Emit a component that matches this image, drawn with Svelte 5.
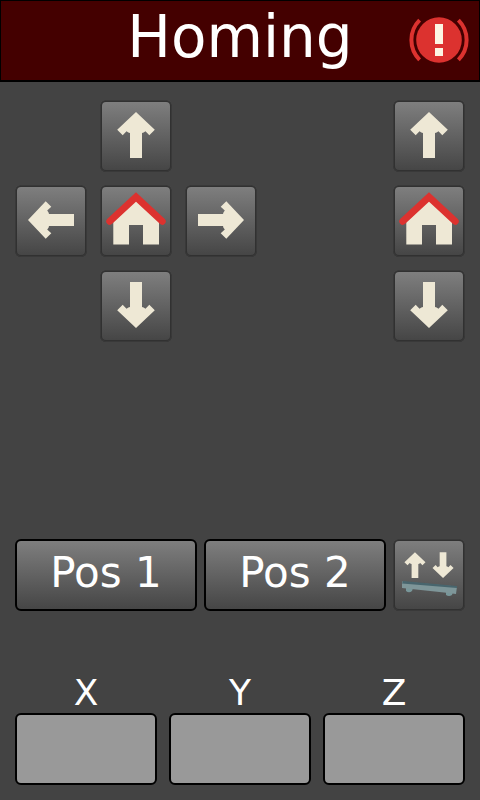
<script>
  const pad = [
    null,
    { label: 'Move Y forward', icon: 'arrow', turn: 0 },
    null,
    { label: 'Move X left', icon: 'arrow', turn: 270 },
    { label: 'Home X and Y', icon: 'home' },
    { label: 'Move X right', icon: 'arrow', turn: 90 },
    null,
    { label: 'Move Y back', icon: 'arrow', turn: 180 },
    null,
  ];
  const lift = [
    { label: 'Move Z up', icon: 'arrow', turn: 0 },
    { label: 'Home Z', icon: 'home' },
    { label: 'Move Z down', icon: 'arrow', turn: 180 },
  ];
  const axes = ['X', 'Y', 'Z'];
  const arrow =
    'M36 12 L54.8 29.7 L49.3 35.3 L45.5 31.2 Q43.5 33 42 33 V58 H30 V33 Q28.5 33 26.5 31.2 L22.7 35.3 L17.2 29.7 Z';
</script>

{#snippet iconButton(item)}
  <button class="tile" type="button" aria-label={item.label}>
    <svg viewBox="0 0 72 72" aria-hidden="true">
      {#if item.icon === 'arrow'}
        <path class="cream" d={arrow} transform="rotate({item.turn} 36 35)" />
      {:else}
        <path class="cream" d="M36 15 L59 37 V59.5 H43 V40 H29 V59.5 H13.3 V37 Z" />
        <path class="roof" d="M9.8 36.3 L36 12 L62.2 36.3" />
      {/if}
    </svg>
  </button>
{/snippet}

<main>
  <header>
    <h1>Homing</h1>
    <button class="alert" type="button" aria-label="Emergency stop">
      <svg viewBox="0 0 64 64" aria-hidden="true">
        <circle cx="32" cy="31" r="22.8" fill="#dc322f" />
        <path
          d="M12.6 11.2 A28 28 0 0 0 12.6 50.8 M51.4 11.2 A28 28 0 0 1 51.4 50.8"
          fill="none"
          stroke="#dc322f"
          stroke-width="4"
        />
        <path d="M28 15h8v20h-8z M28 39h8v8h-8z" fill="#fdf6e3" />
      </svg>
    </button>
  </header>

  <section class="jog">
    <div class="pad">
      {#each pad as item}
        {#if item}
          {@render iconButton(item)}
        {:else}
          <span></span>
        {/if}
      {/each}
    </div>
    <div class="lift">
      {#each lift as item}
        {@render iconButton(item)}
      {/each}
    </div>
  </section>

  <section class="presets">
    <button class="preset" type="button">Pos 1</button>
    <button class="preset" type="button">Pos 2</button>
    <button class="tile" type="button" aria-label="Level bed">
      <svg viewBox="0 0 72 72" aria-hidden="true">
        <path class="cream" d={arrow} transform="translate(1.8 6.5) scale(0.56)" />
        <path class="cream" d={arrow} transform="translate(70.2 45.7) rotate(180) scale(0.56)" />
        <path d="M13 48 L20 49 L19 52 Q16 54.5 13 52 Z M53 52 L60 53 L59 56 Q56 58 53 56 Z" fill="#78979a" />
        <path d="M9 42.5 L64 47.5 L63 55 L51 53.5 L9 49 Z" fill="#7e9699" />
        <path d="M10 42 L64 47 V49 L9 44.5 Z" fill="#48656d" />
      </svg>
    </button>
  </section>

  <section class="axes">
    {#each axes as axis}
      <div class="axis">
        <label for="pos-{axis}">{axis}</label>
        <input id="pos-{axis}" type="text" inputmode="decimal" />
      </div>
    {/each}
  </section>
</main>

<style>
  :global(body) {
    background: #434343;
  }

  main {
    box-sizing: border-box;
    min-height: 100vh;
    display: flex;
    flex-direction: column;
    padding-bottom: 15px;
    background: #434343;
    color: #fff;
    font-family: "DejaVu Sans", Verdana, sans-serif;
  }

  button,
  input {
    box-sizing: border-box;
    margin: 0;
    padding: 0;
    font-family: inherit;
    color: inherit;
  }

  svg {
    display: block;
    width: 100%;
    height: 100%;
  }

  header {
    display: grid;
    grid-template-columns: 64px 1fr 64px;
    align-items: center;
    padding: 0 8px;
    border: 1px solid #000;
    border-bottom-width: 2px;
    background: #440000;
  }

  h1 {
    grid-column: 2;
    margin: 0;
    padding-bottom: 7px;
    font-size: 58px;
    line-height: 72px;
    font-weight: 400;
    text-align: center;
  }

  .alert {
    width: 64px;
    height: 64px;
    border: 0;
    background: none;
  }

  .jog {
    display: flex;
    justify-content: space-between;
    padding: 18px 15px;
  }

  .pad,
  .lift {
    display: grid;
    grid-auto-rows: 72px;
    gap: 13px;
  }

  .pad {
    grid-template-columns: repeat(3, 72px);
  }

  .lift {
    grid-template-columns: 72px;
  }

  .tile,
  .preset {
    height: 72px;
    border-radius: 6px;
    background: linear-gradient(#808080, #444) border-box;
  }

  .tile {
    flex: none;
    width: 72px;
    border: 0;
    box-shadow: inset 0 0 0 1px #393939, inset 0 0 0 2px #313131;
  }

  .cream {
    fill: #eee8d5;
  }

  .roof {
    fill: none;
    stroke: #dc322f;
    stroke-width: 7;
    stroke-linecap: round;
    stroke-linejoin: miter;
  }

  .presets {
    display: flex;
    gap: 7px;
    margin-top: auto;
    padding: 0 15px;
  }

  .preset {
    flex: 1;
    border: 2px solid #000;
    font-size: 42px;
    line-height: 64px;
    padding-bottom: 4px;
  }

  .axes {
    display: flex;
    gap: 12px;
    margin-top: 62px;
    padding: 0 15px;
  }

  .axis {
    flex: 1;
    min-width: 0;
    display: flex;
    flex-direction: column;
  }

  label {
    font-size: 36px;
    line-height: 40px;
    text-align: center;
  }

  input {
    width: 100%;
    height: 72px;
    border: 2px solid #000;
    border-radius: 6px;
    background: #999;
    font-size: 36px;
    text-align: center;
  }
</style>
